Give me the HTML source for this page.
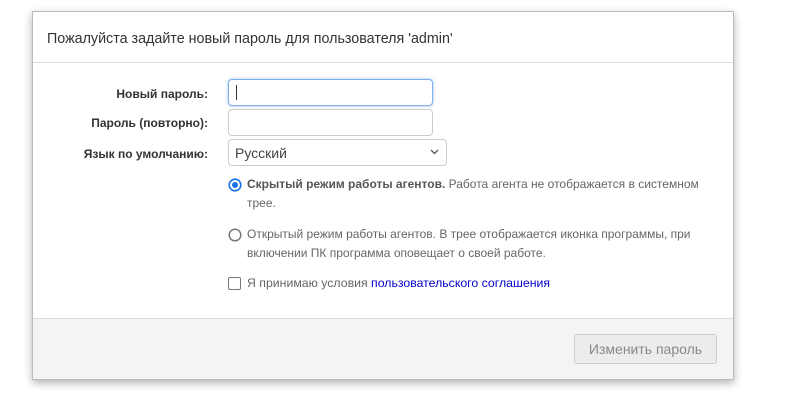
<!DOCTYPE html>
<html><head><meta charset="utf-8"><style>
body{margin:0;background:#fff;font-family:"Liberation Sans",Arial,sans-serif;width:802px;height:411px;position:relative;overflow:hidden}
.p{position:absolute;left:32px;top:11px;width:700px;height:367px;border:1px solid #bbb;box-shadow:0 3px 8px rgba(0,0,0,.3);background:#fff}
.a{position:absolute}
.h{left:14px;top:19px;font-size:14.3px;color:#333}
.hl{left:0;right:0;top:50px;border-top:1px solid #ddd}
.l{right:525px;font-size:12px;font-weight:bold;color:#333;text-align:right}
.in{border:1px solid #ccc;border-radius:4px;background:#fff}
.t{font-size:12px;color:#666;line-height:19px}
.f{left:0;right:0;top:306px;bottom:0;background:#f4f4f4;border-top:1px solid #ddd}
</style></head><body>
<div class="p">
<div class="a h">Пожалуйста задайте новый пароль для пользователя 'admin'</div>
<div class="a hl"></div>
<div class="a l" style="top:75px">Новый пароль:</div>
<div class="a l" style="top:104px">Пароль (повторно):</div>
<div class="a l" style="top:135px">Язык по умолчанию:</div>
<div class="a in" style="left:195px;top:67px;width:203px;height:25px;border-color:#7fb0e8;box-shadow:0 0 3px #9cc3f0"><div style="position:absolute;left:7px;top:5px;width:1px;height:15px;background:#333"></div></div>
<div class="a in" style="left:195px;top:97px;width:203px;height:25px"></div>
<div class="a in" style="left:195px;top:127px;width:217px;height:25px"><span style="position:absolute;left:6px;top:5px;font-size:14px;color:#444">Русский</span><svg style="position:absolute;right:7px;top:9px" width="9" height="6"><path d="M1 1l3.5 3.5L8 1" stroke="#555" fill="none" stroke-width="1.3"/></svg></div>
<svg class="a" style="left:195px;top:166px" width="14" height="14"><circle cx="7" cy="7" r="5.8" fill="#fff" stroke="#1a73e8" stroke-width="1.6"/><circle cx="7" cy="7" r="3" fill="#1a73e8"/></svg>
<div class="a t" style="left:214px;top:163px;width:470px"><b style="color:#555">Скрытый режим работы агентов.</b> Работа агента не отображается в системном<br>трее.</div>
<svg class="a" style="left:195px;top:216px" width="14" height="14"><circle cx="7" cy="7" r="5.8" fill="#fff" stroke="#777" stroke-width="1.5"/></svg>
<div class="a t" style="left:214px;top:213px;width:480px">Открытый режим работы агентов. В трее отображается иконка программы, при<br>включении ПК программа оповещает о своей работе.</div>
<div class="a" style="left:195px;top:265px;width:11px;height:11px;border:1.5px solid #777;border-radius:2px"></div>
<div class="a t" style="left:214px;top:262px;font-size:12.3px">Я принимаю условия <span style="color:#00c">пользовательского соглашения</span></div>
<div class="a f"><div class="a" style="left:541px;top:15px;width:141px;height:28px;border:1px solid #ccc;border-radius:3px;background:#ececec;color:#888;font-size:14px;text-align:center;line-height:28px">Изменить пароль</div></div>
</div>
</body></html>
